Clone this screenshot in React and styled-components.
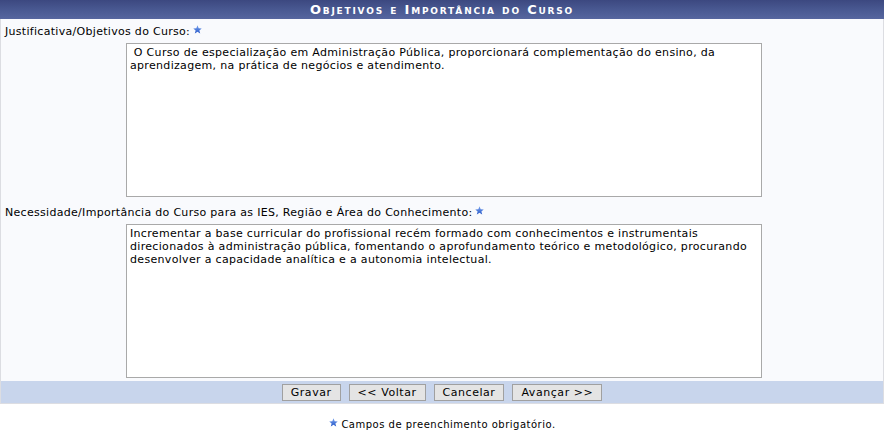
import styled, { createGlobalStyle } from 'styled-components';

const GlobalStyle = createGlobalStyle`
  body {
    margin: 0;
    background: #fff;
    font-family: Verdana, "DejaVu Sans", sans-serif;
    font-size: 11px;
    color: #000;
  }
`;

const Star = () => (
  <StarIcon viewBox="0 0 10 10" aria-hidden="true">
    <defs>
      <linearGradient id="sg" x1="0" y1="0" x2="0" y2="1">
        <stop offset="0" stopColor="#7aa3ee" />
        <stop offset="1" stopColor="#2456c8" />
      </linearGradient>
    </defs>
    <polygon
      points="5,0.4 6.3,3.6 9.7,3.8 7.1,6 8,9.5 5,7.6 2,9.5 2.9,6 0.3,3.8 3.7,3.6"
      fill="url(#sg)"
    />
  </StarIcon>
);

const fields = [
  {
    label: 'Justificativa/Objetivos do Curso:',
    value:
      ' O Curso de especialização em Administração Pública, proporcionará complementação do ensino, da aprendizagem, na prática de negócios e atendimento.',
  },
  {
    label: 'Necessidade/Importância do Curso para as IES, Região e Área do Conhecimento:',
    value:
      'Incrementar a base curricular do profissional recém formado com conhecimentos e instrumentais direcionados à administração pública, fomentando o aprofundamento teórico e metodológico, procurando desenvolver a capacidade analítica e a autonomia intelectual.',
  },
];

const App = () => {
  return (
    <>
      <GlobalStyle />
      <Form>
        <Caption>Objetivos e Importância do Curso</Caption>
        <Body>
          {fields.map((field) => (
            <Field key={field.label}>
              <Label>
                {field.label} <Star />
              </Label>
              <TextArea defaultValue={field.value} />
            </Field>
          ))}
        </Body>
        <Footer>
          <Button>Gravar</Button>
          <Button>&lt;&lt; Voltar</Button>
          <Button>Cancelar</Button>
          <Button>Avançar &gt;&gt;</Button>
        </Footer>
      </Form>
      <Note>
        <Star /> Campos de preenchimento obrigatório.
      </Note>
    </>
  );
};

export default App;

// Styled Components
const Form = styled.div`
  width: 882px;
  border-right: 1px solid #dcdde2;
  border-left: 1px solid #dcdde2;
  border-bottom: 1px solid #dcdde2;
  background: #f9fafd;
`;

const Caption = styled.div`
  height: 19px;
  line-height: 20px;
  margin: 0 -1px;
  background: linear-gradient(#3c4880 0%, #4a5a93 55%, #56669f 100%);
  color: #fff;
  font-weight: bold;
  font-variant: small-caps;
  font-size: 13px;
  letter-spacing: 1.8px;
  text-align: center;
`;

const Body = styled.div`
  display: flex;
  flex-direction: column;
  gap: 3px;
  padding-bottom: 3px;
`;

const Field = styled.div`
  display: flex;
  flex-direction: column;
`;

const Label = styled.div`
  display: flex;
  align-items: center;
  gap: 3px;
  height: 24px;
  padding-left: 4px;
  letter-spacing: 0.3px;
`;

const TextArea = styled.textarea`
  box-sizing: border-box;
  width: 636px;
  height: 154px;
  margin: 0 0 0 125px;
  padding: 2px 3px;
  border: 1px solid #a9a9a9;
  background: #fff;
  font-family: Verdana, "DejaVu Sans", sans-serif;
  font-size: 11px;
  letter-spacing: 0.32px;
  line-height: 13px;
  color: #000;
  resize: none;
  outline: none;
`;

const Footer = styled.div`
  display: flex;
  justify-content: center;
  gap: 8px;
  height: 22px;
  align-items: center;
  background: #c8d5ec;
`;

const Button = styled.button`
  height: 17px;
  padding: 0 8px;
  border: 1px solid #a0a0a0;
  background: #e4e4e4;
  font-family: Verdana, "DejaVu Sans", sans-serif;
  font-size: 11px;
  letter-spacing: 0.55px;
  color: #000;
  cursor: pointer;
`;

const Note = styled.div`
  display: flex;
  justify-content: center;
  align-items: center;
  gap: 3px;
  margin-top: 14px;
  font-size: 10px;
  letter-spacing: 0.5px;
`;

const StarIcon = styled.svg`
  width: 9px;
  height: 9px;
  margin-bottom: 3px;
`;
